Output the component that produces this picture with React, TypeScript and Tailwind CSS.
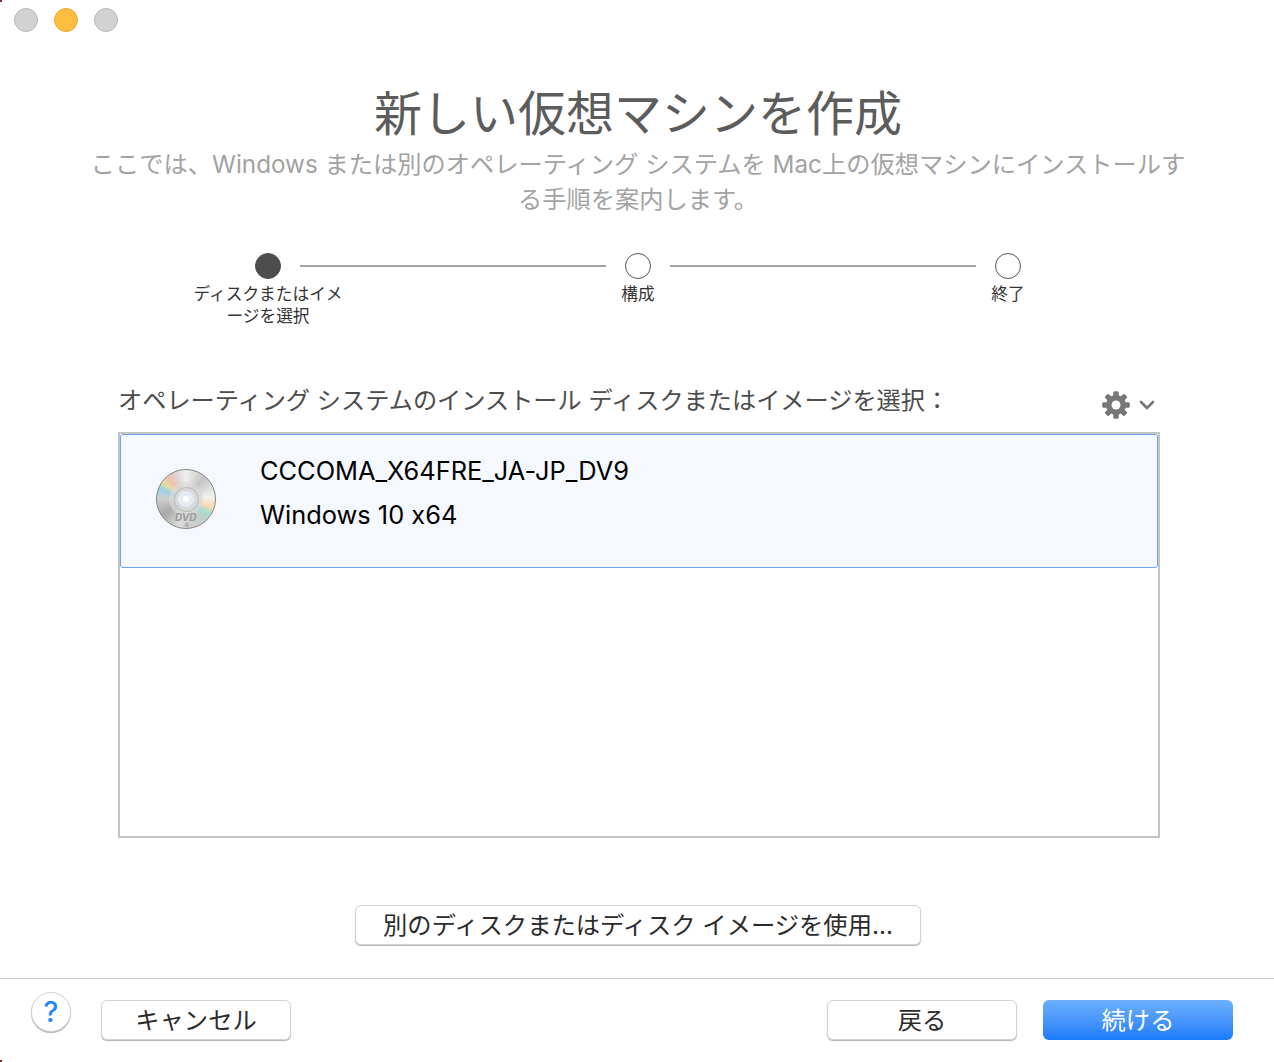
import React from "react";

const FONT = "font-['Inter','Noto_Sans_CJK_JP',sans-serif] [font-feature-settings:'calt'_0]";

function Dot({ color }: { color: string }) {
  return <div className={color + " w-6 h-6 rounded-full border"} />;
}

function Gear() {
  const teeth = [0, 45, 90, 135, 180, 225, 270, 315];
  return (
    <svg width="28" height="28" viewBox="0 0 28 28">
      {teeth.map((a) => (
        <rect key={a} x="11.5" y="0.5" width="5" height="27" rx="1" fill="#777" transform={`rotate(${a} 14 14)`} />
      ))}
      <circle cx="14" cy="14" r="10" fill="#777" />
      <circle cx="14" cy="14" r="4.5" fill="#fff" />
    </svg>
  );
}

function Disc() {
  return (
    <div className="relative w-[60px] h-[60px] mb-[4px] rounded-full border border-[#858585] bg-[conic-gradient(from_0deg,#f0f0f0_0deg,#c4c4c4_40deg,#f2f2f2_85deg,#f5dcae_108deg,#a8dcd2_122deg,#bcd0c8_138deg,#cfcfcf_165deg,#dcdcdc_195deg,#a9a9a9_235deg,#cfcfcf_272deg,#9ad0e6_292deg,#e6e29a_306deg,#f2bfae_320deg,#dcd6d6_338deg,#f0f0f0_360deg)] flex items-center justify-center">
      <div className="w-[34px] h-[34px] rounded-full bg-[#d8d8d8]/70 flex items-center justify-center">
        <div className="w-[25px] h-[25px] rounded-full bg-[#d6d9de] border border-[#b8b8b8] flex items-center justify-center">
          <div className="w-[16px] h-[16px] rounded-full bg-[#e8ebf1] flex items-center justify-center">
            <div className="w-[6px] h-[6px] rounded-full bg-white" />
          </div>
        </div>
      </div>
      <span className="absolute left-[18px] top-[43px] text-[10px] leading-[9px] font-bold italic text-[#9a9a9a]">DVD</span>
      <span className="absolute left-[26px] top-[53px] text-[5px] leading-[5px] font-bold text-[#9a9a9a]">-R</span>
    </div>
  );
}

function Circle({ filled }: { filled?: boolean }) {
  return <div className={(filled ? "bg-[#4d4d4d] border-[#4d4d4d]" : "bg-white border-[#555555]") + " w-[26px] h-[26px] rounded-full border shrink-0"} />;
}

function Line() {
  return <div className="w-[306px] h-[2px] bg-[#a3a3a3] shrink-0" />;
}

function Label({ children }: { children: React.ReactNode }) {
  return <div className="w-[160px] shrink-0 text-[16.7px] leading-[22px] text-[#333333] text-center whitespace-nowrap">{children}</div>;
}

function Btn({ children, primary, className = "" }: { children: React.ReactNode; primary?: boolean; className?: string }) {
  return (
    <button
      className={
        (primary
          ? "bg-gradient-to-b from-[#6db0fb] to-[#1a7bfb] text-white"
          : "bg-white text-[#2b2b2b] border border-[#d4d4d4] shadow-[0_1px_1px_#b0b0b0]") +
        " h-[40px] rounded-[6px] text-[24.3px] leading-[38px] flex items-center justify-center " +
        className
      }
    >
      {children}
    </button>
  );
}

export default function App() {
  return (
    <div className={FONT + " relative w-[1274px] h-[1062px] bg-white flex flex-col overflow-hidden"}>
      <div className="absolute left-0 top-0 w-[2px] h-[2px] bg-[#8a2a2a]" />
      <div className="absolute left-0 bottom-0 w-[2px] h-[2px] bg-[#8a2a2a]" />

      <div className="flex gap-4 pl-[14px] pt-[8px] h-[84px] shrink-0">
        <Dot color="bg-[#d2d2d2] border-[#b8b8b8]" />
        <Dot color="bg-[#fdbd41] border-[#eba72f]" />
        <Dot color="bg-[#d2d2d2] border-[#b8b8b8]" />
      </div>

      <h1 className="pl-[2px] text-center text-[48px] leading-[60px] text-[#5c5c5c] shrink-0">新しい仮想マシンを作成</h1>
      <p className="mt-[3px] pl-[2px] text-center text-[24.25px] leading-[35px] text-[#a3a3a3] whitespace-nowrap shrink-0">
        ここでは、Windows または別のオペレーティング システムを Mac上の仮想マシンにインストールす
        <br />
        る手順を案内します。
      </p>

      <div className="mt-[36px] pl-[255px] flex items-center gap-[19px] shrink-0">
        <Circle filled />
        <Line />
        <Circle />
        <Line />
        <Circle />
      </div>
      <div className="mt-[4px] pl-[188px] flex gap-[210px] h-[78px] shrink-0">
        <Label>
          ディスクまたはイメ
          <br />
          ージを選択
        </Label>
        <Label>構成</Label>
        <Label>終了</Label>
      </div>

      <div className="mt-[22px] ml-[118px] w-[1042px] flex items-center justify-between h-[36px] shrink-0">
        <span className="text-[24.2px] leading-[36px] text-[#4d4d4d] whitespace-nowrap">オペレーティング システムのインストール ディスクまたはイメージを選択：</span>
        <div className="flex items-center gap-[9px] mr-[5px] mt-[8px]">
          <Gear />
          <svg width="16" height="10" viewBox="0 0 16 10" fill="none" stroke="#777" strokeWidth="2.6" strokeLinecap="round" strokeLinejoin="round">
            <path d="M2 2l6 6 6-6" />
          </svg>
        </div>
      </div>

      <div className="mt-[13px] ml-[118px] w-[1042px] h-[406px] border-2 border-[#c3c3c3] shrink-0 bg-white">
        <div className="h-[134px] bg-[#f5f8ff] border border-[#6ea2f2] rounded-[3px] flex items-center pl-[35px]">
          <Disc />
          <div className="ml-[44px] mb-[16px] text-[25.4px] leading-[44px] text-black">
            <div>CCCOMA_X64FRE_JA-JP_DV9</div>
            <div>Windows 10 x64</div>
          </div>
        </div>
      </div>

      <div className="mt-[67px] pl-[355px] flex shrink-0">
        <Btn className="w-[566px]">別のディスクまたはディスク イメージを使用...</Btn>
      </div>

      <div className="mt-[33px] h-[1px] bg-[#cccccc] shrink-0" />

      <div className="relative flex items-start pt-[21px] pl-[101px] pr-[41px] shrink-0">
        <div className="absolute left-[31px] top-[13px] w-[40px] h-[40px] rounded-full bg-white border border-[#d4d4d4] shadow-[0_1px_1px_#b0b0b0] flex items-center justify-center text-[28px] font-medium leading-none text-[#1f85fb]">?</div>
        <Btn className="w-[190px]">キャンセル</Btn>
        <div className="flex-1" />
        <Btn className="w-[190px]">戻る</Btn>
        <Btn primary className="w-[190px] ml-[26px]">続ける</Btn>
      </div>
    </div>
  );
}
